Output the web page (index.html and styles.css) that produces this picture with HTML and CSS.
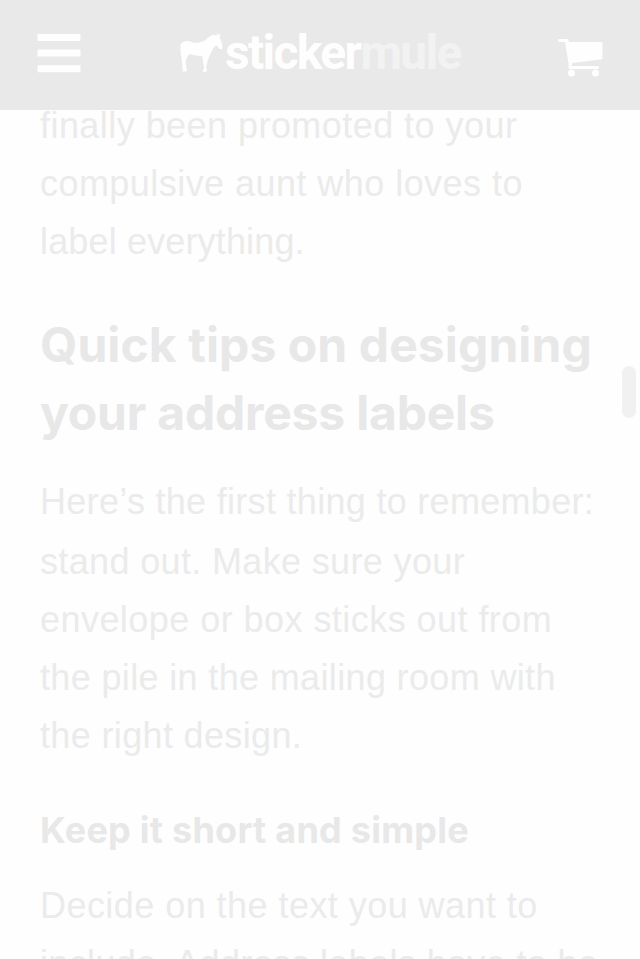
FILE: index.html
```html
<!DOCTYPE html>
<html lang="en">
<head>
<meta charset="utf-8">
<title>Address labels</title>
<link rel="stylesheet" href="styles.css">
</head>
<body>
<header class="bar">
  <svg class="menu" viewBox="0 0 44 40"><path d="M.5 1h43v7h-43zM.5 16.500h43v7h-43zM.5 32.200h43v7h-43z"/></svg>
  <div class="brand">
    <svg class="mule" viewBox="0 0 43 40"><path d="M36.500 2.500L38 0l.5 2.300L40.500.800 39.700 4 42.500 12.500 42 16 39.500 16 36.700 12.500 34.500 13.500 32.500 16.500 29.500 23 27.500 28 26.200 34 27 37.500 25.500 39 22.500 38.500 24 35 23 28 22.200 23 17 22.800 9.500 21 6.500 25 5.700 30 7 37 6.500 38.500 2.800 38.500 2.500 34 1.500 25 .500 19 .500 12Q2 8 8.500 8L14 9.800 19.500 9.600 24 8 29 4 33 1.800z"/></svg>
    <div class="wordmark"><span>sticker</span><span class="soft">mule</span></div>
  </div>
  <svg class="cart" viewBox="0 0 46 40"><path d="M1.500 1H9q1.500 0 2 3h32q1.500 0 1.500 1.500V20q0 1.200-1.500 1.500L14 25v3h25.500q1.500 0 1.500 1.500t-1.500 1.500H12q-1.500 0-1.500-1.500V25L7 4H1.500Q0 4 0 2.500T1.500 1z"/><circle cx="13.500" cy="35" r="3.500"/><circle cx="37.500" cy="35" r="3.500"/></svg>
</header>
<main class="article">
  <p class="first"><span class="open">finally been promoted to your</span><span class="open">compulsive aunt who loves to</span><span class="tight">label everything.</span></p>
  <h2><span>Quick tips on designing</span><span class="second">your address labels</span></h2>
  <p class="tips"><span class="lead">Here’s the first thing to remember:</span><span>stand out. Make sure your</span><span class="open">envelope or box sticks out from</span><span>the pile in the mailing room with</span><span>the right design.</span></p>
  <h3>Keep it short and simple</h3>
  <p><span class="open">Decide on the text you want to</span><span>include. Address labels have to be</span></p>
</main>
<div class="thumb"></div>
</body>
</html>
```
FILE: styles.css
```css
* { box-sizing: border-box; }
html, body { height: 959px; overflow: hidden; }
body { margin: 0; background: #fefefe; font-family: "Liberation Sans", Arial, sans-serif; }
.bar { height: 110px; background: #e9e9e9; display: flex; position: relative; z-index: 1; padding: 33px 37px 0; color: #fefefe; }
svg { fill: currentColor; display: block; flex: none; }
.menu { width: 44px; height: 40px; }
.brand { display: flex; margin-left: 99px; width: 281px; }
.mule { width: 43px; height: 40px; }
.wordmark { margin: -9px 0 0 2px; font: 700 48px/58px Roboto, sans-serif; letter-spacing: -1.7px; white-space: nowrap; }
.soft { color: #f2f2f2; }
.cart { width: 46px; height: 40px; margin: 5px 0 0 97px; }
.article { padding-left: 40px; color: #ebebeb; }
.article span { display: block; white-space: nowrap; }
p { margin: 0; font-size: 36px; line-height: 58px; letter-spacing: .35px; }
.first { margin-top: -13px; }
.open { letter-spacing: .45px; }
.tight { letter-spacing: .15px; }
h2 { margin: 40px 0 0; font: 700 48px/68px Inter, sans-serif; color: #e8e8e8; letter-spacing: .1px; }
.second { letter-spacing: -.2px; }
.tips { margin-top: 26px; }
.tips .lead { padding-bottom: 2px; letter-spacing: .3px; }
h3 { margin: 35px 0 0; font: 700 36px/60px Inter, sans-serif; color: #e8e8e8; letter-spacing: .25px; }
h3 + p { margin-top: 17px; }
.thumb { position: absolute; left: 622px; top: 366px; width: 14px; height: 52px; border-radius: 7px; background: #f1f1f1; }
```
